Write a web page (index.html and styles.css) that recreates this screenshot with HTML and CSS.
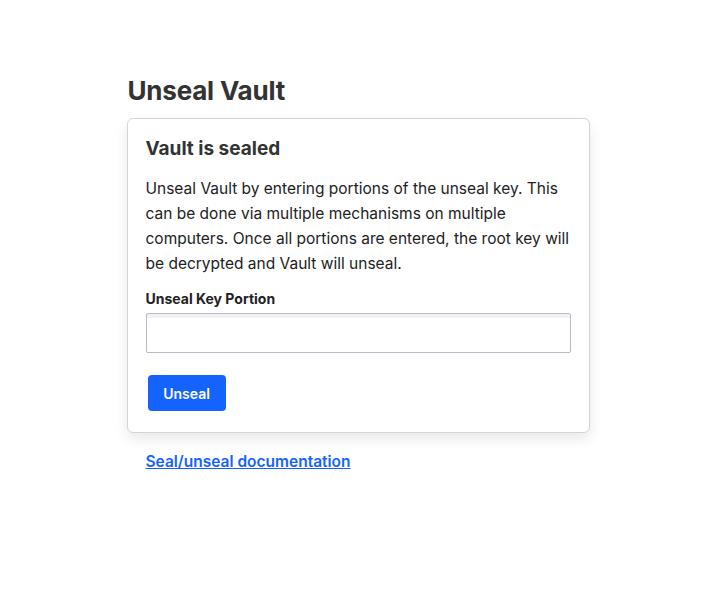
FILE: index.html
```html
<!DOCTYPE html>
<html lang="en">
<head>
<meta charset="utf-8">
<title>Unseal Vault</title>
<link rel="stylesheet" href="styles.css">
</head>
<body>
<main class="page">
  <h1 class="title">Unseal Vault</h1>
  <section class="card">
    <h2 class="card-title">Vault is sealed</h2>
    <p class="desc">Unseal Vault by entering portions of the unseal key. This can be done via multiple mechanisms on multiple computers. Once all portions are entered, the root key will be decrypted and Vault will unseal.</p>
    <label class="label" for="key">Unseal Key Portion</label>
    <input class="input" id="key" type="password">
    <button class="btn" type="button">Unseal</button>
  </section>
  <a class="doc-link" href="#">Seal/unseal documentation</a>
</main>
</body>
</html>
```

FILE: styles.css
```css
html, body {
  margin: 0;
  padding: 0;
  background: #fff;
}
body {
  font-family: Inter, "Noto Sans", sans-serif;
  color: #333;
}
.page {
  width: 463px;
  margin: 0 auto;
  padding-top: 75px;
  padding-left: 6px;
  display: flex;
  flex-direction: column;
  align-items: flex-start;
}
.title {
  margin: 0 0 11px 1px;
  font-size: 26px;
  line-height: 32px;
  font-weight: 700;
  color: #333;
  letter-spacing: -0.2px;
}
.card {
  box-sizing: border-box;
  width: 463px;
  border: 1px solid #d2d4da;
  border-radius: 6px;
  padding: 18px 18px 21px 18px;
  box-shadow: 0 6px 14px rgba(0, 0, 0, 0.09);
  display: flex;
  flex-direction: column;
  align-items: flex-start;
}
.card-title {
  margin: 0 0 15px 0;
  font-size: 19px;
  line-height: 24px;
  font-weight: 700;
  color: #333;
}
.desc {
  margin: 0 0 14px 0;
  font-size: 15.5px;
  line-height: 25px;
  color: #222;
}
.label {
  font-size: 14px;
  line-height: 18px;
  font-weight: 700;
  color: #222;
  margin-bottom: 5px;
}
.input {
  box-sizing: border-box;
  width: 425px;
  height: 40px;
  border: 1px solid #b6bccb;
  border-radius: 2px;
  box-shadow: inset 0 4px 0 #f1f1f3;
  margin: 0 0 22px 0;
  padding: 0 8px;
  font: inherit;
  outline: none;
}
.btn {
  margin-left: 2px;
  width: 78px;
  height: 36px;
  border: 0;
  border-radius: 4px;
  background: #1563ff;
  color: #fff;
  font-family: inherit;
  font-size: 14px;
  font-weight: 600;
  cursor: pointer;
}
.doc-link {
  margin: 18px 0 0 19px;
  font-size: 15.5px;
  line-height: 22px;
  font-weight: 600;
  color: #1563ff;
  text-decoration: underline;
}
```
